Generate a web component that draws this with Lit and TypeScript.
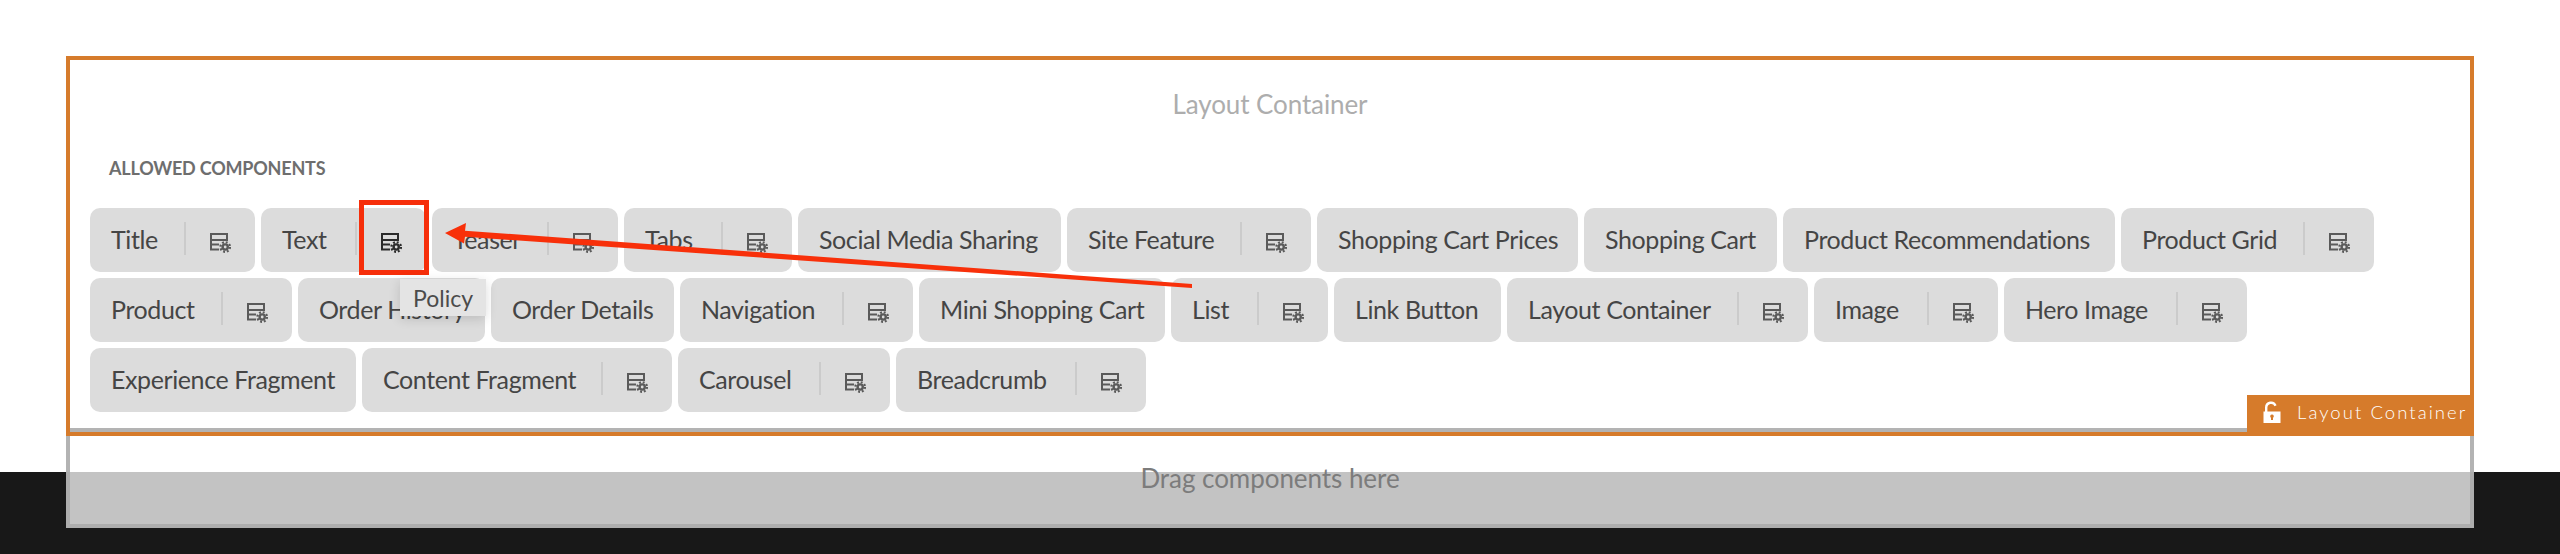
import { LitElement, html, css, svg } from 'lit';
import { customElement } from 'lit/decorators.js';

type Chip = { name: string; w: number; policy?: boolean };

// widths read off the reference, the font here is not the original one
const rows: Chip[][] = [
  [
    { name: 'Title', w: 165, policy: true },
    { name: 'Text', w: 165, policy: true },
    { name: 'Teaser', w: 186, policy: true },
    { name: 'Tabs', w: 168, policy: true },
    { name: 'Social Media Sharing', w: 263 },
    { name: 'Site Feature', w: 244, policy: true },
    { name: 'Shopping Cart Prices', w: 261 },
    { name: 'Shopping Cart', w: 193 },
    { name: 'Product Recommendations', w: 332 },
    { name: 'Product Grid', w: 253, policy: true },
  ],
  [
    { name: 'Product', w: 202, policy: true },
    { name: 'Order History', w: 187 },
    { name: 'Order Details', w: 183 },
    { name: 'Navigation', w: 233, policy: true },
    { name: 'Mini Shopping Cart', w: 246 },
    { name: 'List', w: 157, policy: true },
    { name: 'Link Button', w: 167 },
    { name: 'Layout Container', w: 301, policy: true },
    { name: 'Image', w: 184, policy: true },
    { name: 'Hero Image', w: 243, policy: true },
  ],
  [
    { name: 'Experience Fragment', w: 266 },
    { name: 'Content Fragment', w: 310, policy: true },
    { name: 'Carousel', w: 212, policy: true },
    { name: 'Breadcrumb', w: 250, policy: true },
  ],
];

const policyIcon = svg`
  <path d="M1 7V1h16v6H1v9.5h8M1 11.5h8" fill="none" stroke="currentColor" stroke-width="2"></path>
  <path d="M15.2 10.2a3.8 3.8 0 1 0 0 7.6a3.8 3.8 0 0 0 0-7.6zM15.2 12.6a1.4 1.4 0 1 1 0 2.8a1.4 1.4 0 0 1 0-2.8z" fill-rule="evenodd" fill="currentColor"></path>
  <circle cx="15.2" cy="14" r="4.8" fill="none" stroke="currentColor" stroke-width="2.2" stroke-dasharray="1.9 1.87"></circle>
`;

@customElement('app-root')
export class AppRoot extends LitElement {
  static styles = css`
    :host {
      display: block;
      position: relative;
      width: 2560px;
      height: 554px;
      overflow: hidden;
      background: linear-gradient(#fff 472px, #181818 472px);
      font-family: Lato, 'Open Sans', sans-serif;
    }
    .page {
      display: flex;
      flex-direction: column;
      padding: 56px 86px 0 66px;
    }
    .container {
      position: relative;
      z-index: 1;
      height: 380px;
      box-sizing: border-box;
      border: 4px solid #d67b2b;
      padding: 0 20px;
    }
    .heading {
      height: 88px;
      display: flex;
      align-items: center;
      justify-content: center;
      color: #adadad;
      font-size: 26px;
      letter-spacing: -0.1px;
    }
    .allowed {
      margin: 0 0 0 19px;
      height: 60px;
      font-size: 18px;
      font-weight: 700;
      letter-spacing: -0.2px;
      color: #6e6e6e;
      line-height: 41px;
    }
    .row {
      display: flex;
      gap: 6px;
      margin-bottom: 6px;
    }
    .chip {
      display: flex;
      align-items: center;
      box-sizing: border-box;
      height: 64px;
      padding-left: 21px;
      border-radius: 10px;
      background: #dcdcdc;
      color: #454545;
      font-size: 25px;
      letter-spacing: -0.4px;
      white-space: nowrap;
    }
    .chip span {
      flex: 1;
      margin-top: -2px;
    }
    .policy {
      display: flex;
      align-items: flex-start;
      box-sizing: border-box;
      width: 71px;
      height: 33px;
      margin-top: -3px;
      border-left: 2px solid #cbcbcb;
      color: #5a5a5a;
    }
    .policy svg {
      width: 21px;
      height: 20px;
      margin: 11px 0 0 24px;
    }
    .policy.active {
      color: #2b2b2b;
    }
    .tab {
      position: absolute;
      right: -4px;
      bottom: -4px;
      display: flex;
      align-items: center;
      gap: 16px;
      box-sizing: border-box;
      width: 227px;
      height: 41px;
      padding: 0 0 8px 16px;
      background: #d67b2b;
      color: #fff;
      font-size: 18.5px;
      font-weight: 300;
      letter-spacing: 2.05px;
      white-space: nowrap;
    }
    .tab svg {
      width: 18px;
      height: 22px;
      flex: none;
    }
    .dropzone {
      display: flex;
      align-items: center;
      justify-content: center;
      box-sizing: border-box;
      height: 100px;
      margin-top: -8px;
      border: 4px solid rgba(171, 171, 171, 0.9);
      background: rgba(255, 255, 255, 0.74);
      color: #7c7c7c;
      font-size: 26px;
      letter-spacing: -0.05px;
    }
    .tooltip {
      position: absolute;
      z-index: 3;
      left: 400px;
      top: 279px;
      display: flex;
      align-items: center;
      justify-content: center;
      box-sizing: border-box;
      width: 86px;
      height: 37px;
      background: #e4e4e4;
      box-shadow: 0 3px 12px rgba(0, 0, 0, 0.14);
      color: #4b4b4b;
      font-size: 23px;
    }
    .highlight {
      position: absolute;
      z-index: 2;
      left: 359px;
      top: 200px;
      width: 70px;
      height: 75px;
      box-sizing: border-box;
      border: 5px solid #f62e0a;
    }
    .arrow {
      position: absolute;
      z-index: 2;
      left: 0;
      top: 0;
      width: 2560px;
      height: 554px;
      pointer-events: none;
    }
  `;

  renderChip(c: Chip) {
    const active = c.name === 'Text';
    return html`
      <div class="chip" style="width: ${c.w}px">
        <span>${c.name}</span>
        ${c.policy
          ? html`<div class="policy ${active ? 'active' : ''}">
              <svg viewBox="0 0 21 20">${policyIcon}</svg>
            </div>`
          : ''}
      </div>
    `;
  }

  render() {
    return html`
      <div class="page">
        <div class="container">
          <div class="heading">Layout Container</div>
          <div class="allowed">ALLOWED COMPONENTS</div>
          ${rows.map((r) => html`<div class="row">${r.map((c) => this.renderChip(c))}</div>`)}
          <div class="tab">
            <svg viewBox="0 0 18 22">
              <path d="M2 11V6.5a6 6 0 0 1 11.6-2.2L11.5 5.2A3.7 3.7 0 0 0 4.4 6.5V11z" fill="#fff"></path>
              <path d="M0.5 10.5h17v11.5h-17zM9 13.5a1.8 1.8 0 0 0-1 3.3V19h2v-2.2a1.8 1.8 0 0 0-1-3.3z" fill-rule="evenodd" fill="#fff"></path>
            </svg>
            Layout Container
          </div>
        </div>
        <div class="dropzone">Drag components here</div>
      </div>
      <div class="tooltip">Policy</div>
      <div class="highlight"></div>
      <svg class="arrow" viewBox="0 0 2560 554">
        <path d="M1192 284L465 230.7L466 223L445 233L464 243.5L465 236.7L1192 288z" fill="#f8300a"></path>
      </svg>
    `;
  }
}
